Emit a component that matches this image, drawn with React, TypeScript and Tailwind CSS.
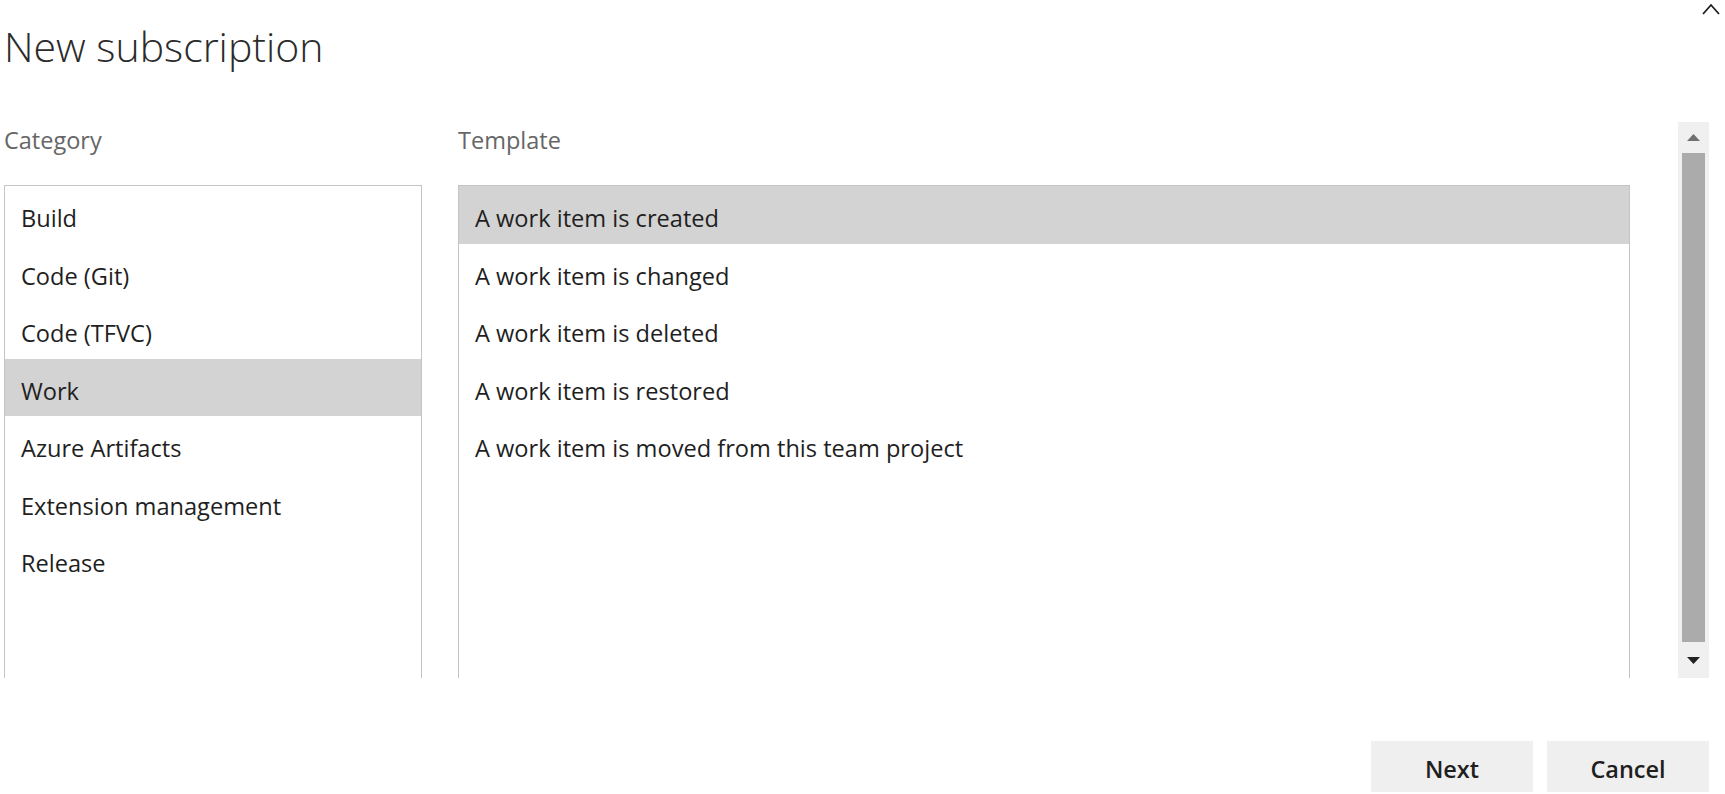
import React from 'react';

const categories = [
  'Build',
  'Code (Git)',
  'Code (TFVC)',
  'Work',
  'Azure Artifacts',
  'Extension management',
  'Release',
];

const templates = [
  'A work item is created',
  'A work item is changed',
  'A work item is deleted',
  'A work item is restored',
  'A work item is moved from this team project',
];

interface ListRowProps {
  label: string;
  selected?: boolean;
}

const ListRow: React.FC<ListRowProps> = ({ label, selected }) => {
  return (
    <div
      className={
        selected
          ? 'h-[57.5px] pl-[16px] pt-[5px] leading-[54px] bg-[#d3d3d3] text-[#1f1f1f]'
          : 'h-[57.5px] pl-[16px] pt-[5px] leading-[54px] text-[#1f1f1f]'
      }
    >
      {label}
    </div>
  );
};

const ScrollBar = () => {
  return (
    <div className="w-[31px] h-[556px] bg-[#f0f0f0] flex flex-col items-center">
      <div className="h-[31px] flex items-center justify-center">
        <svg width="13" height="7" viewBox="0 0 13 7">
          <polygon points="0,7 6.5,0 13,7" fill="#707070" />
        </svg>
      </div>
      <div className="w-[23px] h-[489px] bg-[#ababab]" />
      <div className="flex-1 flex items-center justify-center">
        <svg width="13" height="7" viewBox="0 0 13 7">
          <polygon points="0,0 13,0 6.5,7" fill="#222222" />
        </svg>
      </div>
    </div>
  );
};

export default function App() {
  return (
    <div className="relative w-[1725px] h-[794px] bg-white overflow-hidden font-['Open_Sans',sans-serif]">
      {/* collapse chevron */}
      <svg
        className="absolute top-[3px] right-[5px]"
        width="18"
        height="12"
        viewBox="0 0 18 12"
        fill="none"
        stroke="#1f1f1f"
        strokeWidth="1.8"
      >
        <polyline points="1,11 9,2 17,11" />
      </svg>

      <h1 className="pl-[4px] pt-[16px] h-[122px] text-[41px] leading-[60px] font-light text-[#2b2b2b]">
        New subscription
      </h1>

      <div className="flex items-start">
        <div className="w-[422px] pl-[4px]">
          <div className="h-[63px] pt-[3px] text-[23.5px] leading-[30px] text-[#666666]">Category</div>
          <div className="h-[493px] border-t border-x border-[#c4c4c4] text-[23.6px]">
            {categories.map((c) => (
              <ListRow key={c} label={c} selected={c === 'Work'} />
            ))}
          </div>
        </div>

        <div className="w-[1172px] ml-[36px]">
          <div className="h-[63px] pt-[3px] text-[23.5px] leading-[30px] text-[#666666]">Template</div>
          <div className="h-[493px] border-t border-x border-[#c4c4c4] text-[23.6px]">
            {templates.map((t, i) => (
              <ListRow key={t} label={t} selected={i === 0} />
            ))}
          </div>
        </div>

        <div className="ml-[48px]">
          <ScrollBar />
        </div>
      </div>

      <div className="flex justify-end gap-[14px] pr-[16px] pt-[63px]">
        <button className="w-[162px] h-[51px] pt-[7px] bg-[#efefef] text-[23.5px] font-semibold text-[#1f1f1f]">
          Next
        </button>
        <button className="w-[162px] h-[51px] pt-[7px] bg-[#efefef] text-[23.5px] font-semibold text-[#1f1f1f]">
          Cancel
        </button>
      </div>
    </div>
  );
}
